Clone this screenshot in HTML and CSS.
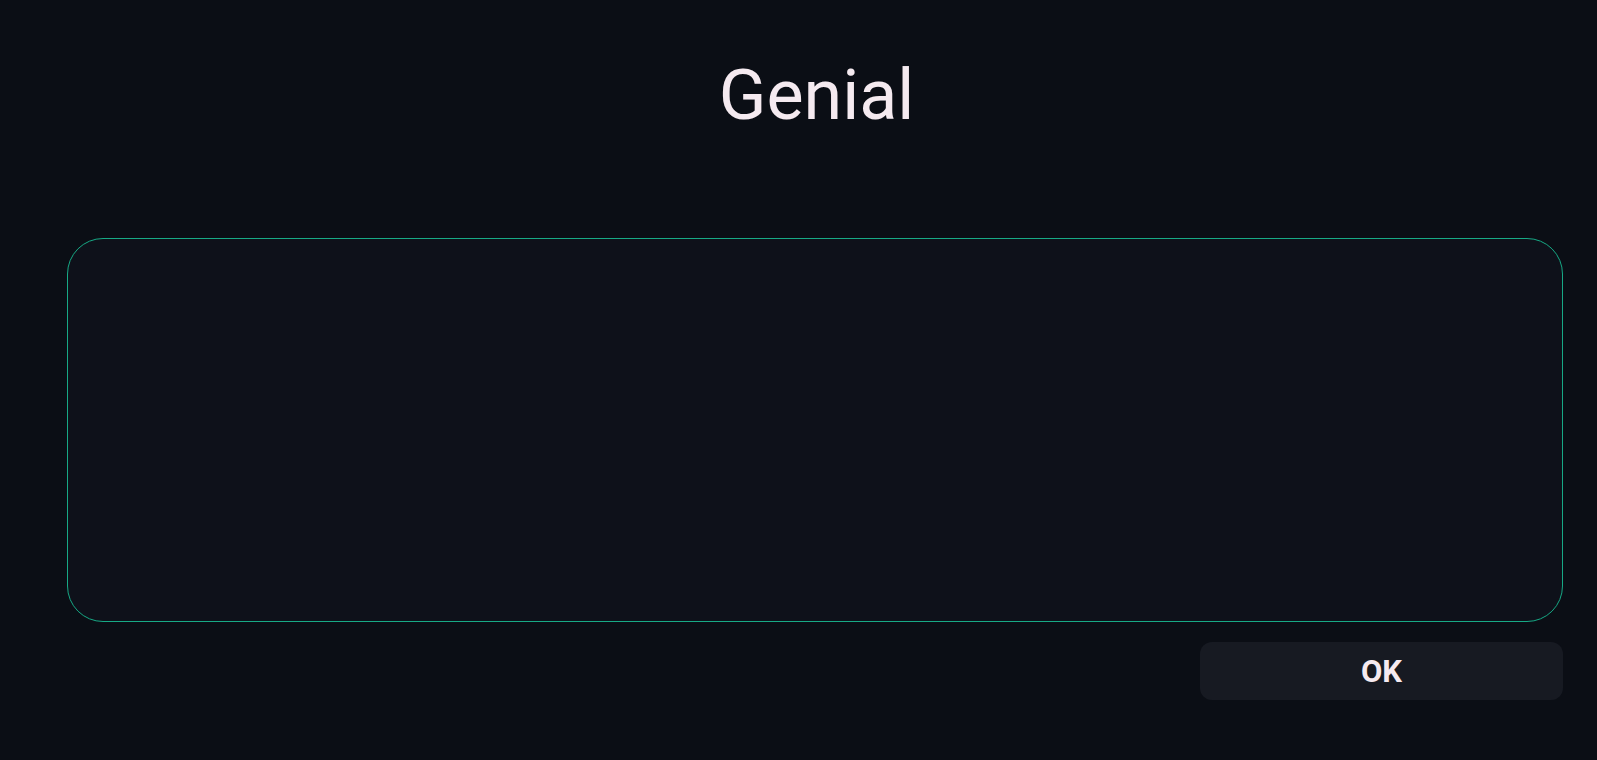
FILE: index.html
```html
<!DOCTYPE html>
<html>
<head>
<meta charset="utf-8">
<link rel="stylesheet" href="styles.css">
</head>
<body>
<div class="page">
  <h1 class="title">Genial</h1>
  <div class="panel"></div>
  <div class="actions">
    <button class="ok">OK</button>
  </div>
</div>
</body>
</html>
```
FILE: styles.css
```css
html, body {
  margin: 0;
  padding: 0;
  background: #0b0e15;
  height: 100%;
}
body {
  font-family: Roboto, "Liberation Sans", sans-serif;
  color: #f5eaf0;
}
.page {
  display: flex;
  flex-direction: column;
  padding: 53px 34px 0 67px;
}
.title {
  margin: 0;
  padding-left: 3px;
  font-size: 70px;
  font-weight: 400;
  line-height: 84px;
  text-align: center;
}
.panel {
  margin-top: 101px;
  height: 382px;
  border: 1px solid #17a985;
  border-radius: 36px;
  background: #0e111a;
}
.actions {
  display: flex;
  justify-content: flex-end;
  margin-top: 20px;
}
.ok {
  width: 363px;
  height: 58px;
  border: none;
  border-radius: 12px;
  background: #171a22;
  color: #f5eaf0;
  font-family: Roboto, "Liberation Sans", sans-serif;
  font-weight: 700;
  font-size: 31px;
  padding: 0;
  cursor: pointer;
}
```
